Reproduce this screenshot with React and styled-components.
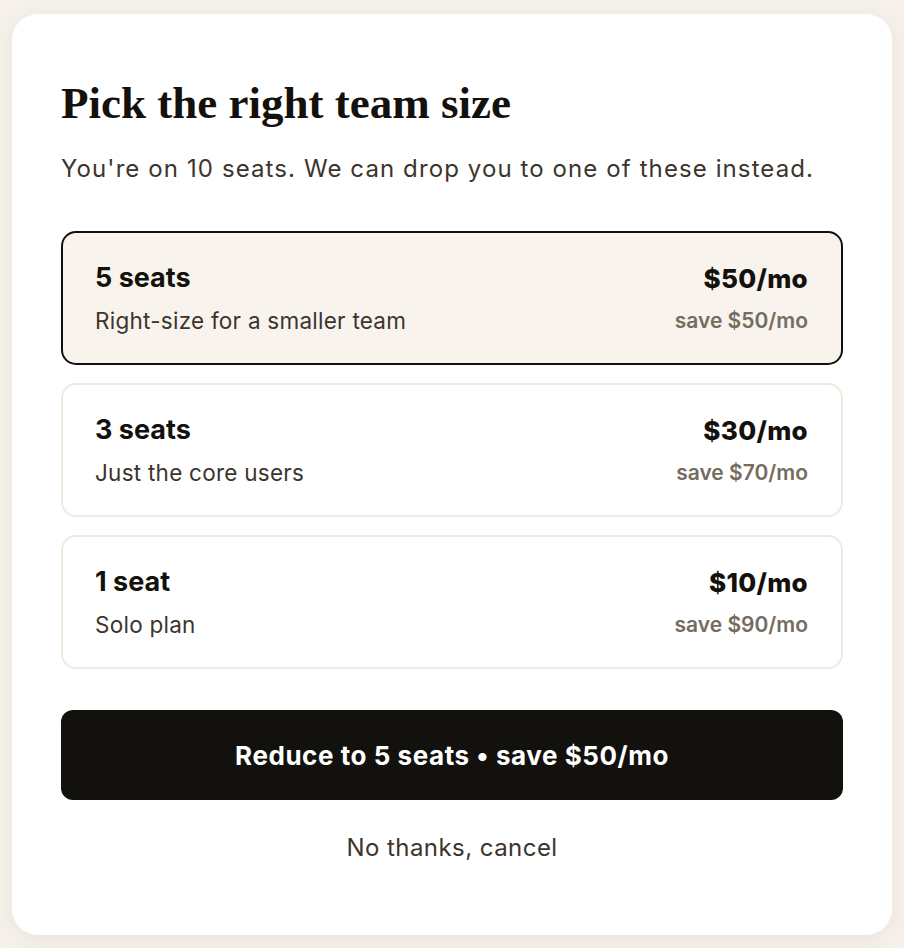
import styled, {createGlobalStyle} from "styled-components";

const GlobalStyle = createGlobalStyle`
  html, body {
    margin: 0;
    padding: 0;
    background: #f6f1eb;
  }
  body {
    font-family: "Inter", "Noto Sans", sans-serif;
    -webkit-font-smoothing: antialiased;
  }
`;

const Page = styled.div`
  padding: 14px 12px 13px;
  box-sizing: border-box;
  min-height: 948px;
`;

const Dialog = styled.div`
  background: #fff;
  border-radius: 26px;
  box-shadow: 0 4px 24px rgba(90, 70, 40, 0.08);
  padding: 62px 49px 0 49px;
  box-sizing: border-box;
  height: 921px;
`;

const Title = styled.h1`
  margin: 0;
  font-family: "Liberation Serif", "DejaVu Serif", serif;
  font-weight: 700;
  font-size: 45px;
  line-height: 54px;
  color: #14110d;
`;

const Lead = styled.p`
  margin: 23px 0 0;
  font-size: 24px;
  line-height: 32px;
  letter-spacing: 1.1px;
  color: #3b352e;
`;

const Options = styled.div`
  margin-top: 46px;
  display: flex;
  flex-direction: column;
  gap: 18px;
`;

const Option = styled.button`
  all: unset;
  box-sizing: border-box;
  height: 134px;
  padding: 0 33px 0 32px;
  display: flex;
  align-items: center;
  justify-content: space-between;
  border-radius: 15px;
  border: 2px solid ${(props) => (props.selected ? "#14110d" : "#f1e9de")};
  background: ${(props) => (props.selected ? "#f8f3ed" : "#fff")};
  cursor: pointer;
`;

const Col = styled.div`
  display: flex;
  flex-direction: column;
  gap: 13px;
  align-items: ${(props) => (props.end ? "flex-end" : "flex-start")};
`;

const Seats = styled.div`
  font-size: 27px;
  line-height: 32px;
  font-weight: 700;
  color: #14110d;
`;

const Desc = styled.div`
  font-size: 22.5px;
  line-height: 28px;
  letter-spacing: 0.25px;
  color: #3b352e;
`;

const Price = styled.div`
  font-size: 26px;
  line-height: 32px;
  font-weight: 800;
  letter-spacing: 0.3px;
  color: #14110d;
`;

const Save = styled.div`
  font-size: 21px;
  line-height: 26px;
  font-weight: 600;
  color: #746c5e;
`;

const Primary = styled.button`
  all: unset;
  box-sizing: border-box;
  margin-top: 41px;
  width: 100%;
  height: 90px;
  border-radius: 12px;
  background: #13110d;
  color: #fff;
  font-size: 26px;
  font-weight: 700;
  letter-spacing: 0.55px;
  text-align: center;
  cursor: pointer;
`;

const Cancel = styled.button`
  all: unset;
  display: block;
  width: 100%;
  margin-top: 32px;
  text-align: center;
  font-size: 24px;
  line-height: 32px;
  letter-spacing: 0.45px;
  color: #3b352e;
  cursor: pointer;
`;

const plans = [
  {seats: "5 seats", desc: "Right-size for a smaller team", price: "$50/mo", save: "save $50/mo"},
  {seats: "3 seats", desc: "Just the core users", price: "$30/mo", save: "save $70/mo"},
  {seats: "1 seat", desc: "Solo plan", price: "$10/mo", save: "save $90/mo"},
];

const App = () => {
  return (
    <Page>
      <GlobalStyle/>
      <Dialog>
        <Title>Pick the right team size</Title>
        <Lead>You're on 10 seats. We can drop you to one of these instead.</Lead>
        <Options>
          {plans.map((p, i) => (
            <Option key={p.seats} selected={i === 0}>
              <Col>
                <Seats>{p.seats}</Seats>
                <Desc>{p.desc}</Desc>
              </Col>
              <Col end>
                <Price>{p.price}</Price>
                <Save>{p.save}</Save>
              </Col>
            </Option>
          ))}
        </Options>
        <Primary>Reduce to 5 seats • save $50/mo</Primary>
        <Cancel>No thanks, cancel</Cancel>
      </Dialog>
    </Page>
  );
};

export default App;
